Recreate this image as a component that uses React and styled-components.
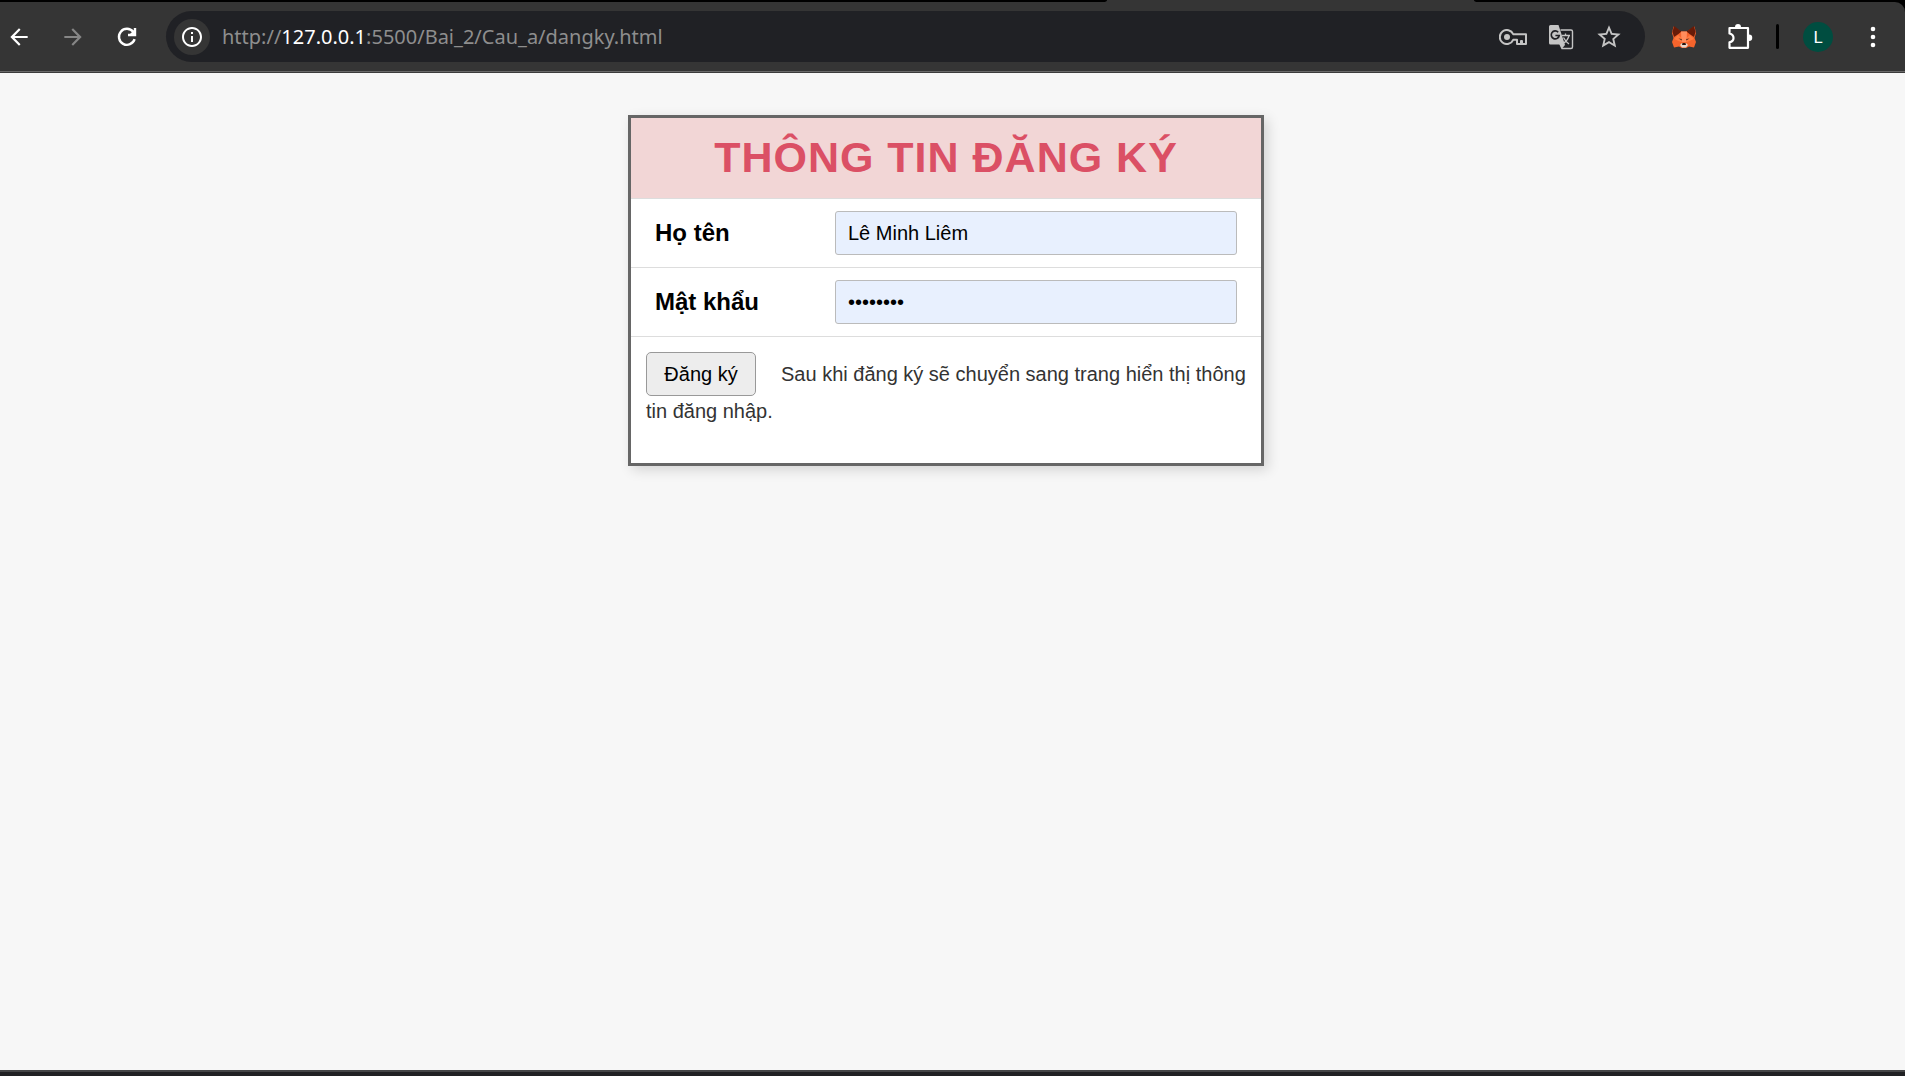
import React from "react";
import styled, { createGlobalStyle } from "styled-components";
import { MdArrowBack, MdArrowForward, MdInfoOutline, MdStarOutline } from "react-icons/md";

const GlobalStyle = createGlobalStyle`
  *, *::before, *::after { box-sizing: border-box; }
  body { margin: 0; background: #f7f7f7; }
`;

const Window = styled.div`
  display: flex;
  flex-direction: column;
  min-height: 100vh;
  font-family: "Liberation Sans", Arial, sans-serif;
  color: #000;
`;

const TabStrip = styled.div`
  display: flex;
  height: 2px;
  background: #353535;
`;

const InactiveTabs = styled.div`
  flex: ${(p) => p.$grow} 1 0;
  background: #000;
  border-bottom-right-radius: ${(p) => (p.$side === "left" ? "4px 2px" : "0")};
  border-bottom-left-radius: ${(p) => (p.$side === "right" ? "4px 2px" : "0")};
`;

const ActiveTab = styled.div`
  flex: 367 1 0;
`;

const ToolbarFrame = styled.div`
  background: #000;
`;

const Toolbar = styled.header`
  display: flex;
  align-items: center;
  height: 71px;
  padding: 0 16px 1px 3px;
  background: #353535;
  border-top-right-radius: 10px;
  border-bottom: 1px solid #3c3c3c;
  box-shadow: inset 0 -1px 0 #6a6a6a;
`;

const IconButton = styled.button`
  display: flex;
  align-items: center;
  justify-content: center;
  width: 32px;
  height: 36px;
  padding: 0;
  border: 0;
  border-radius: 18px;
  background: none;
  color: ${(p) => p.$color || "#fff"};
`;

const Navigation = styled.nav`
  display: flex;
  gap: 22px;
`;

const AddressBar = styled.div`
  display: flex;
  flex: 1;
  align-items: center;
  height: 51px;
  margin-left: 23px;
  padding: 0 20px 0 8px;
  border-radius: 26px;
  background: #202125;
`;

const SiteInfo = styled(IconButton)`
  width: 36px;
  background: #353535;
`;

const Address = styled.div`
  flex: 1;
  margin-left: 12px;
  font-family: "Noto Sans", "Open Sans", sans-serif;
  font-size: 20px;
  line-height: 28px;
  color: #8e8e8e;
`;

const Host = styled.span`
  color: #fff;
`;

const AddressActions = styled.div`
  display: flex;
  gap: 16px;
`;

const Extensions = styled.div`
  display: flex;
  align-items: center;
  margin-left: 23px;
  gap: 24px;
`;

const Divider = styled.span`
  width: 3px;
  height: 25px;
  margin-left: -4px;
  border-radius: 2px;
  background: #000;
`;

const Avatar = styled.button`
  width: 30px;
  height: 30px;
  padding: 0;
  border: 0;
  border-radius: 50%;
  background: #004d40;
  color: #fff;
  font-family: Roboto, sans-serif;
  font-size: 17px;
  line-height: 30px;
`;

const Page = styled.main`
  flex: 1;
  padding: 42px 13px 42px 0;
`;

const Card = styled.form`
  width: 636px;
  max-width: 100%;
  margin: 0 auto;
  border: 3px solid #666;
  background: #fff;
  box-shadow: 4px 4px 12px rgba(0, 0, 0, 0.14);
`;

const Title = styled.h1`
  margin: 0;
  padding: 14px 0 16px;
  border-bottom: 1px solid #ddd;
  background: #f2d6d6;
  color: #db5065;
  font-size: 43px;
  line-height: 50px;
  letter-spacing: 1px;
  text-align: center;
`;

const Field = styled.div`
  display: flex;
  align-items: center;
  padding: 12px 24px;
  border-bottom: 1px solid #ddd;
`;

const Label = styled.label`
  width: 180px;
  font-size: 24px;
  font-weight: 700;
  line-height: 28px;
`;

const TextInput = styled.input`
  flex: 1;
  min-width: 0;
  height: 44px;
  padding: 0 12px;
  border: 1px solid #bbb;
  border-radius: 3px;
  background: #e8f0fe;
  color: #000;
  font-family: inherit;
  font-size: 20px;
`;

const Submit = styled.div`
  padding: 15px 15px 37px;
  color: #333;
  font-size: 20px;
  line-height: 30px;
`;

const SubmitButton = styled.button`
  width: 110px;
  height: 44px;
  margin-right: 25px;
  padding: 0;
  border: 1px solid #999;
  border-radius: 5px;
  background: #ededed;
  color: #000;
  font-family: inherit;
  font-size: 20px;
`;

const BottomEdge = styled.footer`
  height: 6px;
  border-top: 2px solid #444546;
  background: #202123;
`;

const ReloadIcon = () => (
  <svg width="20" height="20" viewBox="0 0 20 20" fill="none" stroke="currentColor" strokeWidth="2.4">
    <path d="M17.6 12.2A8 8 0 1 1 16.2 4.8" />
    <path d="M18 1v7H11" />
    <path d="M17.5 2.5v5h-5z" fill="currentColor" stroke="none" />
  </svg>
);

const KeyIcon = () => (
  <svg width="28" height="16" viewBox="0 0 28 16" fill="none" stroke="currentColor" strokeWidth="2">
    <path d="M14.2 5.2A7 7 0 1 0 14.2 10.8H18V15h4v-3h1v3h4V5.2z" strokeLinejoin="round" />
    <circle cx="8" cy="8" r="3" fill="currentColor" stroke="none" />
  </svg>
);

const TranslateIcon = () => (
  <svg width="26" height="26" viewBox="0 0 26 26" fill="none">
    <path d="M12.5 6H23q1.5 0 1.5 1.5v15.5q0 1.5-1.5 1.5H14L11 18" stroke="currentColor" strokeWidth="1.4" />
    <path d="M2.5 1h8L17 21l-3 3.5-2-4H2.5Q1 20.5 1 19V2.5Q1 1 2.5 1z" fill="currentColor" />
    <path d="M10.2 8.2A4 4 0 1 0 11.2 11.5H7.4" stroke="#202125" strokeWidth="1.7" />
    <path d="M14 11.5h8M17.5 9.5v2M21 11.5q-1 5-6 8M15.5 13.5q2 4 5.5 6.5" stroke="currentColor" strokeWidth="1.3" />
  </svg>
);

const FoxIcon = () => (
  <svg width="24" height="24" viewBox="0 0 24 24">
    <path d="M1.5 1.5L9 6.5h6l7.5-5L24 8l-1.5 5L24 17l-2 5.5-5-1L14 23h-4l-3-1.5-5 1L0 17l1.5-4L0 8z" fill="#f5642c" />
    <path d="M2 1L9.5 6.5 6.5 9 2 12 .5 7z" fill="#671b08" />
    <path d="M22 1l-7.5 5.5 3 2.5 4.5 3 1.5-5z" fill="#671b08" />
    <path d="M9 6.5h6L14.5 17h-5z" fill="#ff8d5d" />
    <path d="M6 10l4 3.5L9 17l-7-3zM18 10l-4 3.5 1 3.5 7-3z" fill="#ff7a3f" />
    <path d="M6.5 13.5l3 .5.5 1.5zM17.5 13.5l-3 .5-.5 1.5z" fill="#33201c" />
    <path d="M8 20l2-2h4l2 2-2 2.5h-4z" fill="#e8d8cd" />
    <path d="M10.5 18h3l.5 2h-4z" fill="#27150f" />
  </svg>
);

const PuzzleIcon = () => (
  <svg width="26" height="26" viewBox="0 0 26 26" fill="none" stroke="currentColor" strokeWidth="2.2">
    <path d="M2.5 4H21v19.8H2.5v-5.5q4-1 4-4.4t-4-4.4z" strokeLinejoin="round" />
    <path d="M8 3a3 3 0 0 1 6 0zM22 10.5a3 3 0 0 1 0 6.5z" fill="currentColor" stroke="none" />
  </svg>
);

const MenuIcon = () => (
  <svg width="6" height="22" viewBox="0 0 6 22" fill="currentColor">
    <circle cx="3" cy="3" r="2.3" />
    <circle cx="3" cy="11" r="2.3" />
    <circle cx="3" cy="19" r="2.3" />
  </svg>
);

export default function App() {
  return (
    <Window>
      <GlobalStyle />
      <TabStrip>
        <InactiveTabs $grow={1107} $side="left" />
        <ActiveTab />
        <InactiveTabs $grow={431} $side="right" />
      </TabStrip>
      <ToolbarFrame>
        <Toolbar>
          <Navigation>
            <IconButton type="button" aria-label="Back"><MdArrowBack size={26} /></IconButton>
            <IconButton type="button" aria-label="Forward" $color="#868686"><MdArrowForward size={26} /></IconButton>
            <IconButton type="button" aria-label="Reload"><ReloadIcon /></IconButton>
          </Navigation>
          <AddressBar>
            <SiteInfo type="button" aria-label="Site information"><MdInfoOutline size={24} /></SiteInfo>
            <Address>http://<Host>127.0.0.1</Host>:5500/Bai_2/Cau_a/dangky.html</Address>
            <AddressActions>
              <IconButton type="button" aria-label="Passwords" $color="#c4c4c4"><KeyIcon /></IconButton>
              <IconButton type="button" aria-label="Translate" $color="#c4c4c4"><TranslateIcon /></IconButton>
              <IconButton type="button" aria-label="Bookmark" $color="#c4c4c4"><MdStarOutline size={28} /></IconButton>
            </AddressActions>
          </AddressBar>
          <Extensions>
            <IconButton type="button" aria-label="Wallet"><FoxIcon /></IconButton>
            <IconButton type="button" aria-label="Extensions"><PuzzleIcon /></IconButton>
            <Divider />
            <Avatar type="button" aria-label="Profile">L</Avatar>
            <IconButton type="button" aria-label="Menu"><MenuIcon /></IconButton>
          </Extensions>
        </Toolbar>
      </ToolbarFrame>
      <Page>
        <Card onSubmit={(e) => e.preventDefault()}>
          <Title>THÔNG TIN ĐĂNG KÝ</Title>
          <Field>
            <Label htmlFor="name">Họ tên</Label>
            <TextInput id="name" type="text" defaultValue="Lê Minh Liêm" />
          </Field>
          <Field>
            <Label htmlFor="password">Mật khẩu</Label>
            <TextInput id="password" type="password" defaultValue="12345678" />
          </Field>
          <Submit>
            <SubmitButton type="submit">Đăng ký</SubmitButton>
            Sau khi đăng ký sẽ chuyển sang trang hiển thị thông tin đăng nhập.
          </Submit>
        </Card>
      </Page>
      <BottomEdge />
    </Window>
  );
}
